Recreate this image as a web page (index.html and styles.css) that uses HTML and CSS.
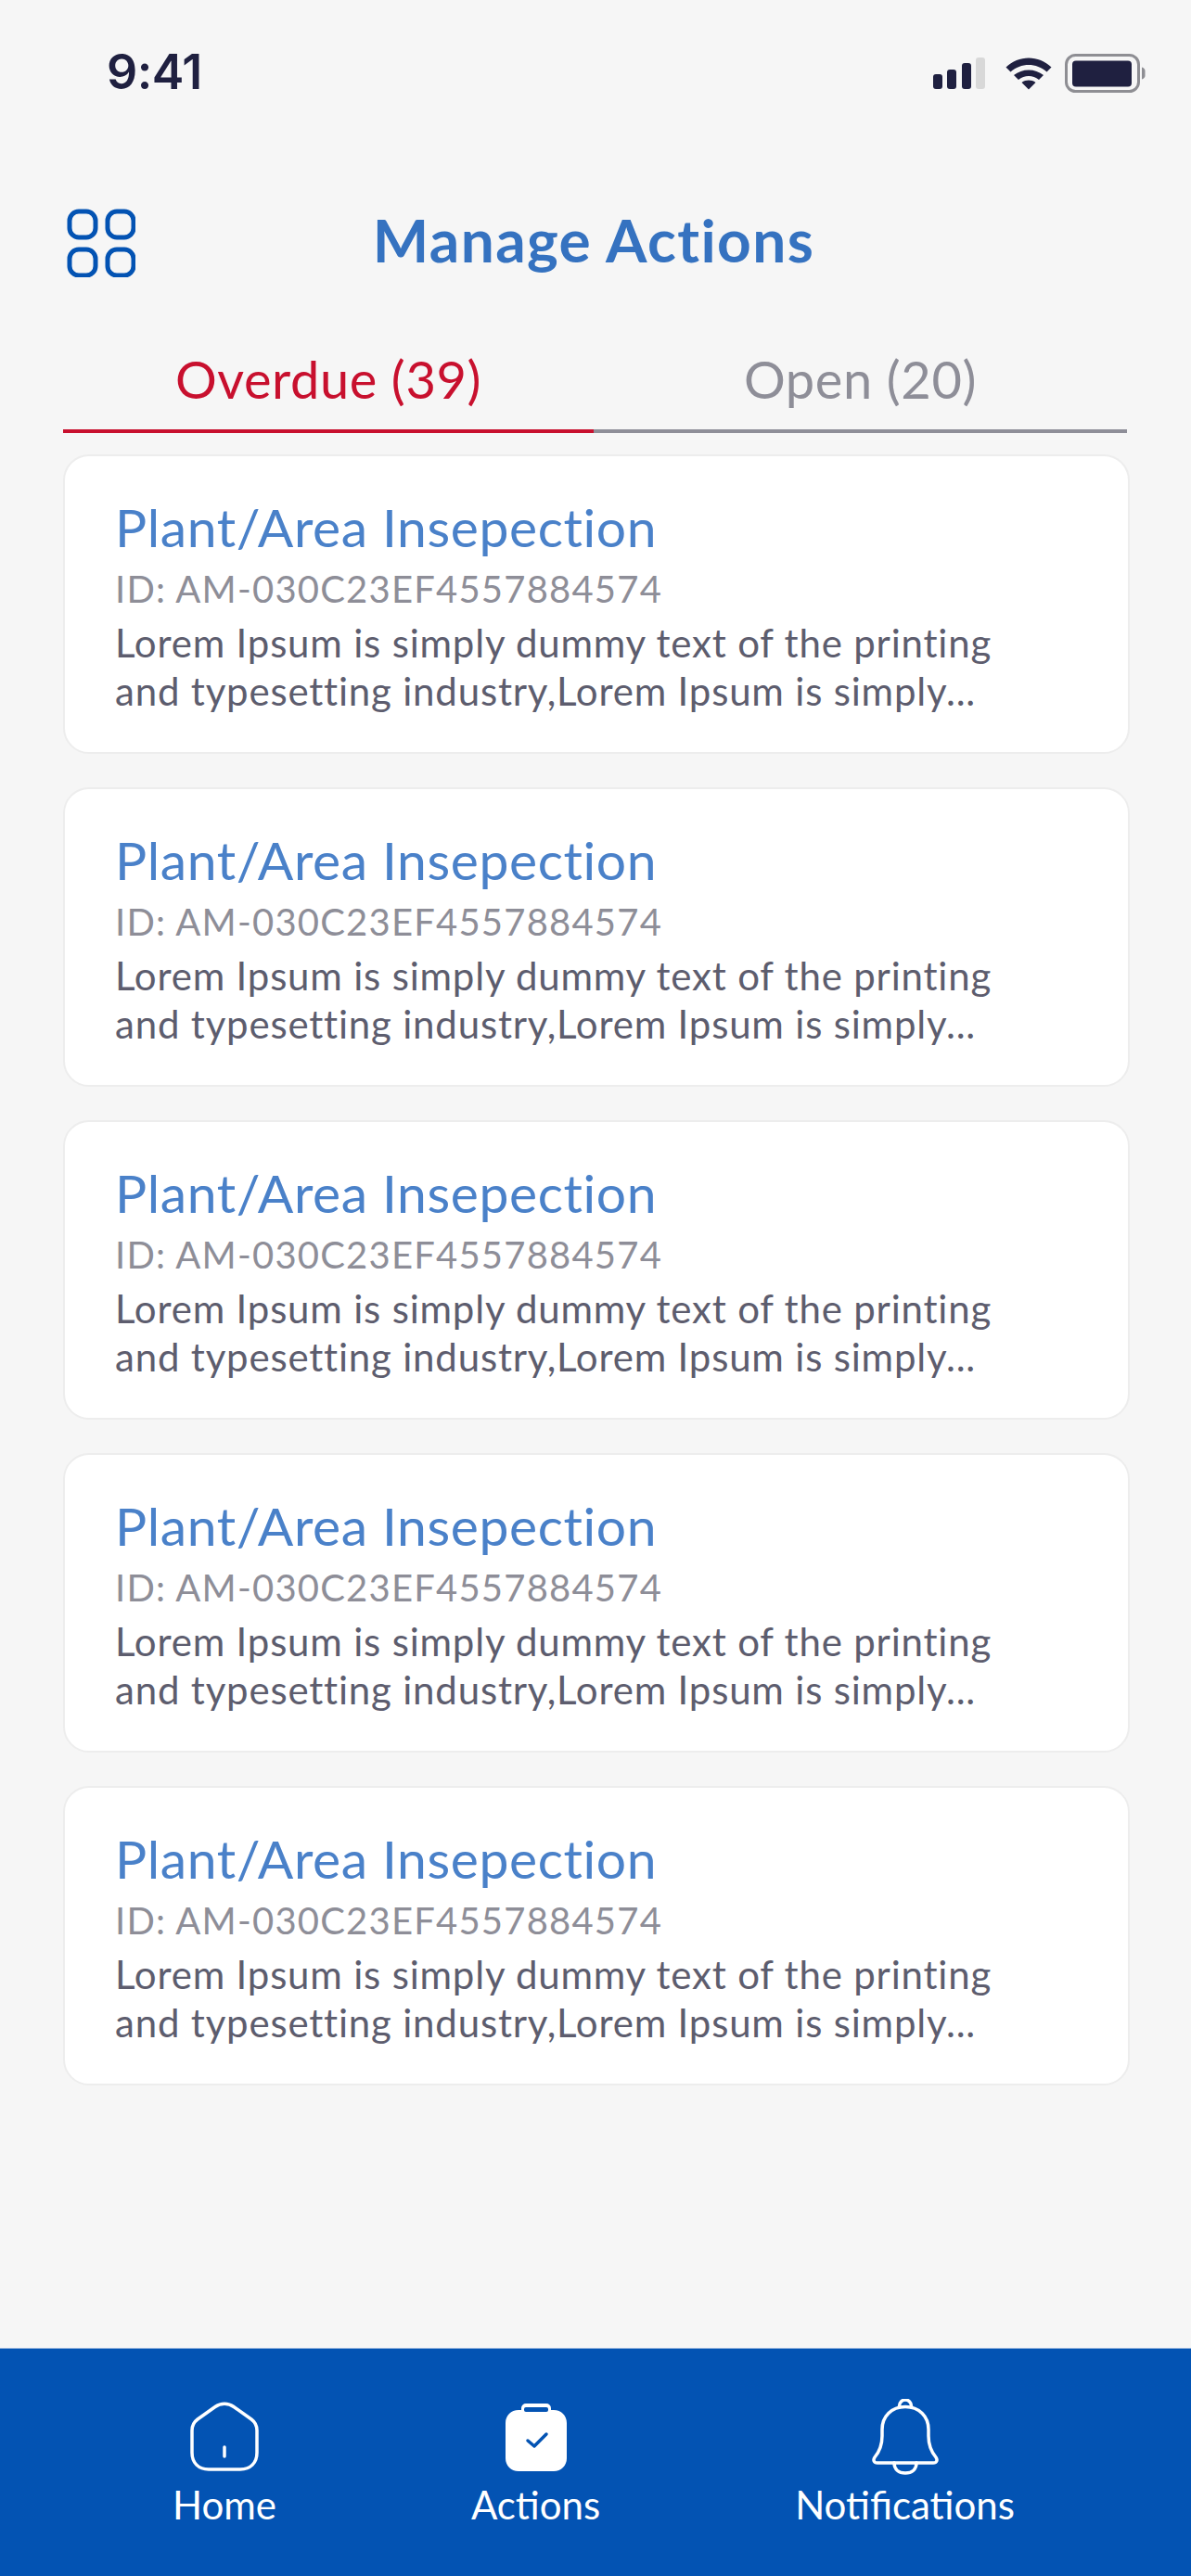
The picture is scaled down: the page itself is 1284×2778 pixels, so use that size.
FILE: index.html
```html
<!DOCTYPE html>
<html lang="en">
<head>
<meta charset="utf-8">
<title>Manage Actions</title>
<link rel="stylesheet" href="styles.css">
</head>
<body>
<div class="page">
  <div class="status">
    <span class="time">9:41</span>
    <div class="status-icons">
      <svg class="signal" width="56" height="34" viewBox="0 0 56 34"><rect x="0" y="18" width="10" height="16" rx="3" fill="#1f2040"/><rect x="15" y="13" width="10" height="21" rx="3" fill="#1f2040"/><rect x="31" y="6" width="10" height="28" rx="3" fill="#1f2040"/><rect x="46" y="0" width="10" height="34" rx="3" fill="#d8d8d8"/></svg>
      <svg class="wifi" width="50" height="35" viewBox="0 0 50 35"><path d="M0.5 10.5C14 -3 36 -3 49.5 10.500L44.500 15.500C33.500 5.500 16.500 5.500 5.500 15.500Z" fill="#1f2040"/><path d="M9 19C18 11.500 32 11.500 41 19L36 24C29.500 18.800 20.500 18.800 14 24Z" fill="#1f2040"/><path d="M17.500 27C22 23.800 28 23.800 32.500 27L25 34.500Z" fill="#1f2040"/></svg>
      <svg class="battery" width="87" height="42" viewBox="0 0 87 42"><rect x="1.500" y="1.500" width="78" height="39" rx="10" fill="none" stroke="#8e8e93" stroke-width="3"/><rect x="8" y="7.500" width="64" height="28" rx="4" fill="#1f2040"/><path d="M83 14.500c2 .5 3.500 2 3.500 4v5c0 2-1.500 3.500-3.500 4z" fill="#8e8e93"/></svg>
    </div>
  </div>
  <header class="head">
    <svg class="grid-icon" width="76" height="76" viewBox="0 0 76 76" fill="none" stroke="#0353b3" stroke-width="5"><rect x="5" y="5" width="28" height="28" rx="10"/><rect x="46" y="5" width="28" height="28" rx="10"/><rect x="5" y="46" width="28" height="28" rx="10"/><rect x="46" y="46" width="28" height="28" rx="10"/></svg>
    <h1 class="head-title">Manage Actions</h1>
  </header>
  <nav class="tabs">
    <div class="tab tab-active">Overdue (39)</div>
    <div class="tab">Open (20)</div>
  </nav>
  <main class="list">
    <article class="card"><h2 class="card-title">Plant/Area Insepection</h2><p class="card-id">ID: AM-030C23EF4557884574</p><p class="card-text">Lorem Ipsum is simply dummy text of the printing<br>and typesetting industry,Lorem Ipsum is simply...</p></article>
    <article class="card"><h2 class="card-title">Plant/Area Insepection</h2><p class="card-id">ID: AM-030C23EF4557884574</p><p class="card-text">Lorem Ipsum is simply dummy text of the printing<br>and typesetting industry,Lorem Ipsum is simply...</p></article>
    <article class="card"><h2 class="card-title">Plant/Area Insepection</h2><p class="card-id">ID: AM-030C23EF4557884574</p><p class="card-text">Lorem Ipsum is simply dummy text of the printing<br>and typesetting industry,Lorem Ipsum is simply...</p></article>
    <article class="card"><h2 class="card-title">Plant/Area Insepection</h2><p class="card-id">ID: AM-030C23EF4557884574</p><p class="card-text">Lorem Ipsum is simply dummy text of the printing<br>and typesetting industry,Lorem Ipsum is simply...</p></article>
    <article class="card"><h2 class="card-title">Plant/Area Insepection</h2><p class="card-id">ID: AM-030C23EF4557884574</p><p class="card-text">Lorem Ipsum is simply dummy text of the printing<br>and typesetting industry,Lorem Ipsum is simply...</p></article>
  </main>
  <footer class="bottom">
    <div class="nav-item">
      <div class="nav-icon"><svg width="76" height="76" viewBox="0 0 76 76" fill="none" stroke="#fff" stroke-width="3.500" stroke-linecap="round" stroke-linejoin="round"><path d="M28 5.500C34 1 42 1 48 5.500L67 19C71 22 73 26 73 31V55C73 66 66 73 55 73H21C10 73 3 66 3 55V31C3 26 5 22 9 19Z"/><path d="M38 49V59"/></svg></div>
      <span>Home</span>
    </div>
    <div class="nav-item">
      <div class="nav-icon"><svg width="66" height="74" viewBox="0 0 66 74"><path d="M22 1h22a5 5 0 0 1 5 5v2h3c8 0 14 6 14 14v38c0 8-6 14-14 14H14C6 74 0 68 0 60V22C0 14 6 8 14 8h3V6a5 5 0 0 1 5-5z" fill="#fff"/><rect x="20" y="5" width="26" height="5" rx="2" fill="#0353b3"/><path d="M24 41l7 6 13-13" fill="none" stroke="#0353b3" stroke-width="3.500" stroke-linecap="round" stroke-linejoin="round"/></svg></div>
      <span>Actions</span>
    </div>
    <div class="nav-item">
      <div class="nav-icon"><svg width="72" height="82" viewBox="0 0 72 82" fill="none" stroke="#fff" stroke-width="3.500" stroke-linecap="round" stroke-linejoin="round"><path d="M29.500 9V7.500a6.500 6.500 0 0 1 13 0V9"/><path d="M36 8.500C21 8.500 11 19 11 33V40C11 50 8 57 3 63C1 66 2 69 6 69H66C70 69 71 66 69 63C64 57 61 50 61 40V33C61 19 51 8.500 36 8.500Z"/><path d="M24 69C24 76 29 80 36 80S48 76 48 69"/></svg></div>
      <span>Notifications</span>
    </div>
  </footer>
</div>
</body>
</html>
```
FILE: styles.css
```css
* { box-sizing: border-box; }
html, body { margin: 0; padding: 0; }
body { background: #f6f6f6; font-family: "Lato", "Noto Sans", sans-serif; }
.page { height: 2778px; display: flex; flex-direction: column; overflow: hidden; }
.status { height: 156px; padding: 48px 49px 0 115px; display: flex; justify-content: space-between; align-items: flex-start; }
.time { font-family: "Inter", sans-serif; font-weight: 600; font-size: 52px; line-height: 60px; color: #1f2040; letter-spacing: -0.5px; }
.status-icons { display: flex; align-items: center; gap: 22px; padding-top: 10px; }
.battery { margin-left: -8px; }
.head { height: 223px; padding: 67px 74px 0 70px; display: grid; grid-template-columns: 76px 1fr 76px; align-items: start; }
.head-title { margin: 0; text-align: center; font-size: 64px; line-height: 72px; font-weight: 700; letter-spacing: 1.4px; color: #3572c0; }
.tabs { margin: 0 69px 0 68px; display: flex; }
.tab { flex: 1; height: 88px; text-align: center; font-size: 56px; line-height: 60px; letter-spacing: 0.6px; color: #8e8e98; border-bottom: 4px solid #8e8e98; }
.tab-active { flex: 0 0 572px; color: #c8102e; border-bottom-color: #c8102e; }
.list { flex: 1; padding: 23px 66px 0 68px; display: flex; flex-direction: column; gap: 36px; }
.card { height: 323px; padding: 35px 0 0 54px; background: #fff; border: 2px solid #ededed; border-radius: 28px; white-space: nowrap; }
.card-title { margin: 0; font-size: 57px; line-height: 82px; font-weight: 400; letter-spacing: 0.6px; color: #4a81c9; }
.card-id { margin: 0; font-size: 40px; line-height: 52px; font-weight: 400; letter-spacing: 1.2px; color: #8e8e98; }
.card-text { margin: 0; padding-top: 6px; font-size: 42px; line-height: 52px; font-weight: 400; letter-spacing: 0.8px; color: #5d5d6e; }
.bottom { height: 246px; flex: none; background: #0353b3; border-top: 1px solid #8fb0da; display: flex; gap: 210px; padding: 54px 0 0 186px; }
.nav-item { display: flex; flex-direction: column; align-items: center; color: #fff; font-size: 42px; line-height: 50px; font-weight: 400; }
.nav-icon { height: 82px; margin-bottom: 7px; display: flex; align-items: center; justify-content: center; }
```
